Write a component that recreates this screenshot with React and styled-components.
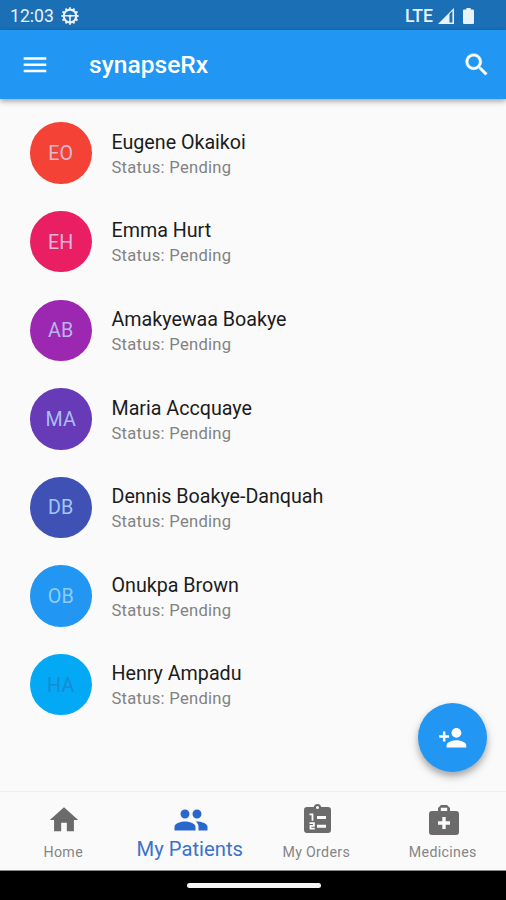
import React from "react";
import styled, { createGlobalStyle } from "styled-components";

const GlobalStyle = createGlobalStyle`
  * { box-sizing: border-box; }
  body { margin: 0; background: #fafafa; font-family: Roboto, "Liberation Sans", sans-serif; }
  svg { display: block; flex: none; }
  button { border: 0; padding: 0; margin: 0; background: none; font: inherit; color: inherit; }
`;

const Screen = styled.div`
  width: 506px;
  height: 900px;
  display: flex;
  flex-direction: column;
  background: #fafafa;
  overflow: hidden;
  position: relative;
`;

const StatusBar = styled.div`
  height: 30px;
  flex: none;
  background: #1a6fb5;
  color: #e9f1f9;
  display: flex;
  align-items: center;
  justify-content: space-between;
  padding: 1px 32px 0 10px;
`;

const StatusGroup = styled.div`
  display: flex;
  align-items: center;
  gap: ${(p) => p.$gap}px;
`;

const Clock = styled.span`
  font-size: 17.6px;
  line-height: 20px;
  letter-spacing: 0;
  padding-top: 1px;
`;

const Network = styled.span`
  font-size: 17.6px;
  line-height: 20px;
  font-weight: 500;
  letter-spacing: 0;
`;

const AppBar = styled.header`
  height: 69px;
  flex: none;
  background: #2196f3;
  color: #fff;
  display: flex;
  align-items: center;
  padding: 0 14.5px 0 20px;
  box-shadow: 0 2px 5px rgba(0, 0, 0, 0.28), 0 4px 6px rgba(0, 0, 0, 0.08);
`;

const Title = styled.h1`
  flex: 1;
  margin: 0 0 0 39.5px;
  font-size: 24.6px;
  line-height: 30px;
  font-weight: 500;
  letter-spacing: 0;
`;

const PatientList = styled.ul`
  flex: 1;
  margin: 0;
  padding: 9.8px 0 0;
  list-style: none;
`;

const PatientRow = styled.li`
  height: 88.6px;
  display: flex;
  align-items: center;
  gap: 20px;
  padding-left: 30px;
`;

const Avatar = styled.div`
  width: 61.5px;
  height: 61.5px;
  border-radius: 50%;
  flex: none;
  display: flex;
  align-items: center;
  justify-content: center;
  background: ${(p) => p.$bg};
  color: ${(p) => p.$fg};
  font-size: 19.7px;
  letter-spacing: 0.1px;
  padding-top: 1px;
`;

const PatientText = styled.div`
  display: flex;
  flex-direction: column;
  gap: 2px;
  padding-top: 3.4px;
`;

const Name = styled.span`
  font-size: 19.7px;
  line-height: 24px;
  letter-spacing: -0.02px;
  color: #1c1c1c;
`;

const Status = styled.span`
  font-size: 16.6px;
  line-height: 22px;
  letter-spacing: 0.27px;
  color: #828282;
`;

const AddButton = styled.button`
  position: absolute;
  left: 418px;
  top: 703px;
  width: 69px;
  height: 69px;
  border-radius: 50%;
  background: #2196f3;
  color: #fff;
  display: flex;
  align-items: center;
  justify-content: center;
  box-shadow: 0 4px 6px rgba(0, 0, 0, 0.25), 0 5px 12px rgba(0, 0, 0, 0.12);
`;

const BottomNav = styled.nav`
  height: 80px;
  flex: none;
  display: grid;
  grid-template-columns: repeat(4, 1fr);
  border-top: 1px solid #efefef;
  border-bottom: 1px solid #8a8a8a;
`;

const NavItem = styled.button`
  display: flex;
  flex-direction: column;
  align-items: center;
  color: ${(p) => (p.$active ? "#2a67cb" : "#6b6b6b")};
`;

const NavIcon = styled.span`
  height: ${(p) => (p.$active ? 45 : 49)}px;
  padding-top: ${(p) => p.$top}px;
  padding-left: 1.5px;
`;

const NavLabel = styled.span`
  font-size: ${(p) => (p.$active ? 20.2 : 14.2)}px;
  line-height: ${(p) => (p.$active ? 24 : 22)}px;
  letter-spacing: ${(p) => (p.$active ? 0.03 : 0.32)}px;
  color: ${(p) => (p.$active ? "#3a72cd" : "#858585")};
  white-space: nowrap;
`;

const GestureBar = styled.div`
  height: 29px;
  flex: none;
  background: #000;
  display: flex;
  align-items: center;
  justify-content: center;
`;

const Handle = styled.div`
  width: 134px;
  height: 5px;
  border-radius: 2.5px;
  background: #f4f4f4;
  margin-left: 1px;
`;

const Icon = ({ size = 29.5, d, weight = 0 }) => (
  <svg
    width={size}
    height={size}
    viewBox="0 0 24 24"
    fill="currentColor"
    stroke="currentColor"
    strokeWidth={weight}
    aria-hidden="true"
  >
    <path fillRule="evenodd" d={d} />
  </svg>
);

const paths = {
  menu: "M3 18.2h18.4v-2.2H3v2.2zm0-5.1h18.4v-2.2H3v2.2zm0-7.3v2.2h18.4V5.8H3z",
  search:
    "M15.5 14h-.79l-.28-.27C15.41 12.59 16 11.11 16 9.5 16 5.91 13.09 3 9.5 3S3 5.91 3 9.5 5.91 16 9.5 16c1.61 0 3.09-.59 4.23-1.57l.27.28v.79l5 4.99L20.49 19l-4.99-5zm-6 0C7.01 14 5 11.99 5 9.5S7.01 5 9.5 5 14 7.01 14 9.5 11.99 14 9.5 14z",
  personAdd:
    "M15 12c2.21 0 4-1.79 4-4s-1.79-4-4-4-4 1.79-4 4 1.79 4 4 4zm-9-2V7H4v3H1v2h3v3h2v-3h3v-2H6zm9 4c-2.67 0-8 1.34-8 4v2h16v-2c0-2.66-5.33-4-8-4z",
  home: "M10 20v-6h4v6h5v-8h3L12 3 2 12h3v8z",
  people:
    "M16 11c1.66 0 2.99-1.34 2.99-3S17.66 5 16 5c-1.66 0-3 1.34-3 3s1.34 3 3 3zm-8 0c1.66 0 2.99-1.34 2.99-3S9.66 5 8 5C6.34 5 5 6.34 5 8s1.34 3 3 3zm0 2c-2.33 0-7 1.17-7 3.5V19h14v-2.5c0-2.33-4.67-3.5-7-3.5zm8 0c-.29 0-.62.02-.97.05 1.16.84 1.97 1.97 1.97 3.45V19h6v-2.5c0-2.33-4.67-3.5-7-3.5z",
};

const wheelTeeth = Array.from({ length: 12 }, (_, i) => i * 30);

const WheelIcon = () => (
  <svg width="18" height="18" viewBox="0 0 18 18" fill="none" stroke="currentColor" aria-hidden="true">
    <circle cx="9" cy="9" r="6.3" strokeWidth="2.2" />
    {wheelTeeth.map((angle) => (
      <path key={angle} d="M9 0.3v2" strokeWidth="1.8" transform={`rotate(${angle} 9 9)`} />
    ))}
    <path d="M3.5 8.7h11M9 9v6" strokeWidth="1.6" />
    <circle cx="9" cy="9" r="1.5" fill="currentColor" stroke="none" />
  </svg>
);

const SignalIcon = () => (
  <svg width="16" height="16" viewBox="0 0 16 16" fill="currentColor" aria-hidden="true">
    <path fillRule="evenodd" d="M16 0v16H0L16 0zM11.5 6v8.4h2.9V3L11.5 6z" />
  </svg>
);

const BatteryIcon = () => (
  <svg width="11" height="16" viewBox="0 0 11 16" fill="currentColor" aria-hidden="true">
    <path d="M3.3 0h4.4v1.6h2.2q1.1 0 1.1 1V15q0 1-1 1H1q-1 0-1-1V2.6q0-1 1.1-1h2.2z" />
  </svg>
);

const OrdersIcon = () => (
  <svg width="27" height="29" viewBox="0 0 27 29" aria-hidden="true">
    <path
      fill="currentColor"
      fillRule="evenodd"
      d="M3 3h6.8a3.8 3.8 0 0 1 7.4 0H24q3 0 3 3v20q0 3-3 3H3q-3 0-3-3V6q0-3 3-3zM13.5 2a1.5 1.5 0 1 0 0 3 1.500 1.500 0 0 0 0-3z"
    />
    <path
      stroke="#fafafa"
      fill="none"
      strokeWidth="1.8"
      d="M5.5 10.3H8.5v6.400M5.5 19.200h4.400v2.700H6.500v2.800h4.300"
    />
    <path stroke="#fafafa" strokeWidth="3" d="M13 13.500h9M13 22.200h9" />
  </svg>
);

const MedicalIcon = () => (
  <svg width="30" height="30" viewBox="0 0 30 30" fill="currentColor" aria-hidden="true">
    <path
      fillRule="evenodd"
      d="M9 6V3l3-3h6l3 3v3h6q3 0 3 3v18q0 3-3 3H3q-3 0-3-3V9q0-3 3-3zM11.800 2.800v3.200h6.400V2.800zM13.300 12v4.300H9v3.400h4.300V24h3.400v-4.300H21v-3.400h-4.300V12z"
    />
  </svg>
);

const patients = [
  { name: "Eugene Okaikoi", initials: "EO", bg: "#f44336", fg: "#ddb9cf" },
  { name: "Emma Hurt", initials: "EH", bg: "#e91e63", fg: "#dcb8dc" },
  { name: "Amakyewaa Boakye", initials: "AB", bg: "#9c27b0", fg: "#bab3ef" },
  { name: "Maria Accquaye", initials: "MA", bg: "#673ab7", fg: "#a9bdf3" },
  { name: "Dennis Boakye-Danquah", initials: "DB", bg: "#3f51b5", fg: "#a2c7f2" },
  { name: "Onukpa Brown", initials: "OB", bg: "#2196f3", fg: "#91cbfa" },
  { name: "Henry Ampadu", initials: "HA", bg: "#03a9f4", fg: "#178bd7" },
];

const navItems = [
  { label: "Home", top: 11, icon: <Icon size={34} d={paths.home} /> },
  { label: "My Patients", top: 10, active: true, icon: <Icon size={36} d={paths.people} /> },
  { label: "My Orders", top: 12, icon: <OrdersIcon /> },
  { label: "Medicines", top: 13, icon: <MedicalIcon /> },
];

export default function App() {
  return (
    <Screen>
      <GlobalStyle />
      <StatusBar>
        <StatusGroup $gap={7.5}>
          <Clock>12:03</Clock>
          <WheelIcon />
        </StatusGroup>
        <StatusGroup $gap={9}>
          <StatusGroup $gap={5}>
            <Network>LTE</Network>
            <SignalIcon />
          </StatusGroup>
          <BatteryIcon />
        </StatusGroup>
      </StatusBar>
      <AppBar>
        <Icon d={paths.menu} />
        <Title>synapseRx</Title>
        <Icon d={paths.search} weight={0.4} />
      </AppBar>
      <PatientList>
        {patients.map((p) => (
          <PatientRow key={p.initials}>
            <Avatar $bg={p.bg} $fg={p.fg}>{p.initials}</Avatar>
            <PatientText>
              <Name>{p.name}</Name>
              <Status>Status: Pending</Status>
            </PatientText>
          </PatientRow>
        ))}
      </PatientList>
      <AddButton aria-label="Add patient">
        <Icon d={paths.personAdd} />
      </AddButton>
      <BottomNav>
        {navItems.map((n) => (
          <NavItem key={n.label} $active={n.active}>
            <NavIcon $top={n.top} $active={n.active}>{n.icon}</NavIcon>
            <NavLabel $active={n.active}>{n.label}</NavLabel>
          </NavItem>
        ))}
      </BottomNav>
      <GestureBar>
        <Handle />
      </GestureBar>
    </Screen>
  );
}
